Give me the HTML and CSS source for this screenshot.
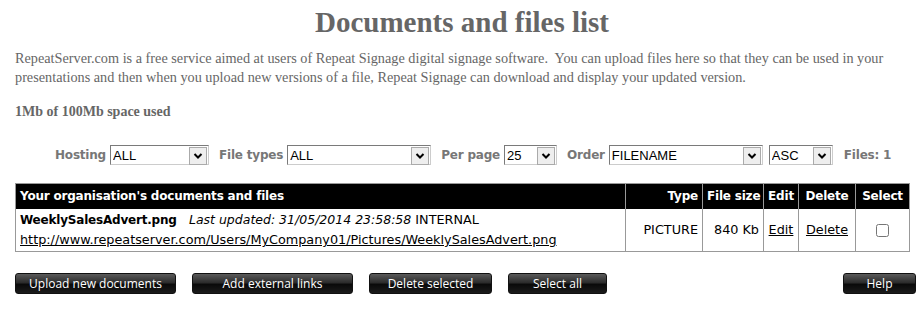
FILE: index.html
```html
<!DOCTYPE html>
<html lang="en">
<head>
    <meta charset="UTF-8">
    <title>Documents and files list</title>
    <link rel="stylesheet" href="styles.css">
</head>

<body>
    <h1 class="title">Documents and files list</h1>

    <p class="intro">RepeatServer.com is a free service aimed at users of Repeat Signage digital signage software.&nbsp; You can upload files here so that they can be used in your<br>presentations and then when you upload new versions of a file, Repeat Signage can download and display your updated version.</p>

    <p class="usage">1Mb of 100Mb space used</p>

    <form class="filters">
        <label>Hosting</label>
        <span class="pick w-hosting"><select><option>ALL</option></select></span>
        <label>File types</label>
        <span class="pick w-types"><select><option>ALL</option></select></span>
        <label>Per page</label>
        <span class="pick w-page"><select><option>25</option></select></span>
        <label>Order</label>
        <span class="pick w-order"><select><option>FILENAME</option></select></span>
        <span class="pick w-dir"><select><option>ASC</option></select></span>
        <span class="count">Files: 1</span>
    </form>

    <table class="files">
        <tr class="head">
            <th class="name">Your organisation's documents and files</th>
            <th class="type">Type</th>
            <th class="size">File size</th>
            <th class="edit">Edit</th>
            <th class="del">Delete</th>
            <th class="sel">Select</th>
        </tr>
        <tr class="row">
            <td class="name">
                <b>WeeklySalesAdvert.png</b>&nbsp;&nbsp; <i>Last updated: 31/05/2014 23:58:58</i> INTERNAL<br>
                <a href="#">http://www.repeatserver.com/Users/MyCompany01/Pictures/WeeklySalesAdvert.png</a>
            </td>
            <td class="type">PICTURE</td>
            <td class="size">840 Kb</td>
            <td class="edit"><a href="#">Edit</a></td>
            <td class="del"><a href="#">Delete</a></td>
            <td class="sel"><input type="checkbox"></td>
        </tr>
    </table>

    <div class="actions">
        <button class="btn w-upload">Upload new documents</button>
        <button class="btn w-links">Add external links</button>
        <button class="btn w-delete">Delete selected</button>
        <button class="btn w-all">Select all</button>
        <button class="btn w-help">Help</button>
    </div>
</body>
</html>
```

FILE: styles.css
```css
* {
    box-sizing: border-box;
}

body {
    margin: 0;
    padding: 0 15px;
    background: #fff;
}

.title {
    font-family: "Liberation Serif", serif;
    font-size: 29px;
    color: #666;
    text-align: center;
    margin: 6px 0 0;
    line-height: 32px;
}

.intro {
    font-family: "Liberation Serif", serif;
    font-size: 14.25px;
    line-height: 19px;
    color: #666;
    margin: 11px 0 0;
}

.usage {
    font-family: "Liberation Serif", serif;
    font-size: 14px;
    font-weight: bold;
    color: #666;
    margin: 17px 0 0;
}

.filters {
    display: flex;
    align-items: center;
    margin: 25px 0 0 40px;
    height: 20px;
    font-family: "DejaVu Sans", Verdana, sans-serif;
    font-size: 12px;
    letter-spacing: -0.2px;
    font-weight: bold;
    color: #777;
    white-space: nowrap;
}

.filters label {
    margin: 0 4px 0 10px;
    flex-shrink: 0;
}

.filters label:first-child {
    margin-left: 0;
}

.pick {
    position: relative;
    display: inline-block;
    flex-shrink: 0;
    height: 20px;
}

.pick select {
    appearance: none;
    -webkit-appearance: none;
    width: 100%;
    height: 20px;
    border: 1px solid #7a7a7a;
    border-right-color: #ccc;
    border-bottom-color: #ccc;
    border-radius: 0;
    background: #fff;
    font-family: "Liberation Sans", Arial, sans-serif;
    font-size: 13px;
    letter-spacing: 0;
    padding: 0 0 0 2px;
    color: #000;
    outline: none;
}

.pick::after {
    content: "";
    position: absolute;
    top: 2px;
    right: 2px;
    width: 16px;
    height: 16px;
    border: 1px solid #aaa;
    background: #eee url("data:image/svg+xml,%3Csvg xmlns='http://www.w3.org/2000/svg' width='14' height='14'%3E%3Cpath d='M3.5 5 L7 8.5 L10.5 5' fill='none' stroke='%23000' stroke-width='2'/%3E%3C/svg%3E") center no-repeat;
    pointer-events: none;
}

.w-hosting { width: 99px; }
.w-types { width: 144px; }
.w-page { width: 53px; }
.w-order { width: 154px; margin-right: 6px; }
.w-dir { width: 64px; }

.count {
    margin-left: 11px;
}

.files {
    width: 894px;
    margin-top: 18px;
    border-collapse: collapse;
    table-layout: fixed;
    border: 1px solid #999;
    font-family: "DejaVu Sans", Verdana, sans-serif;
    font-size: 12.8px;
}

.head {
    height: 25px;
}

.row {
    height: 43px;
}

.files th {
    background: #000;
    color: #fff;
    font-weight: bold;
    font-size: 12px;
    letter-spacing: -0.2px;
    padding: 0 4px;
    border-left: 1px solid #999;
    text-align: center;
    white-space: nowrap;
}

.files td {
    padding: 0 4px;
    border-left: 1px solid #999;
    text-align: center;
    line-height: 19px;
    white-space: nowrap;
}

.files td b {
    font-size: 12px;
    letter-spacing: -0.2px;
}

.files td i {
    font-size: 12.5px;
}

.files .name {
    text-align: left;
    border-left: 0;
    width: 610px;
}

.files .type { width: 77px; text-align: right; }
.files .size { width: 61px; text-align: right; }
.files .edit { width: 35px; }
.files .del { width: 57px; }
.files .sel { width: 54px; }

.files a {
    color: #000;
}

.sel input {
    width: 13px;
    height: 13px;
    margin: 0;
    vertical-align: middle;
}

.actions {
    display: flex;
    gap: 16px;
    margin-top: 21px;
}

.btn {
    height: 21px;
    border: 1px solid #111;
    border-radius: 3px;
    background: linear-gradient(#5a5a5a, #2c2c2c 45%, #0a0a0a 55%, #1b1b1b);
    color: #fff;
    font-family: "Open Sans", sans-serif;
    font-size: 12px;
    padding: 0;
    line-height: 18px;
}

.w-upload { width: 161px; }
.w-links { width: 161px; }
.w-delete { width: 123px; }
.w-all { width: 99px; }
.w-help { width: 73px; margin-left: auto; margin-right: -7px; }
```
